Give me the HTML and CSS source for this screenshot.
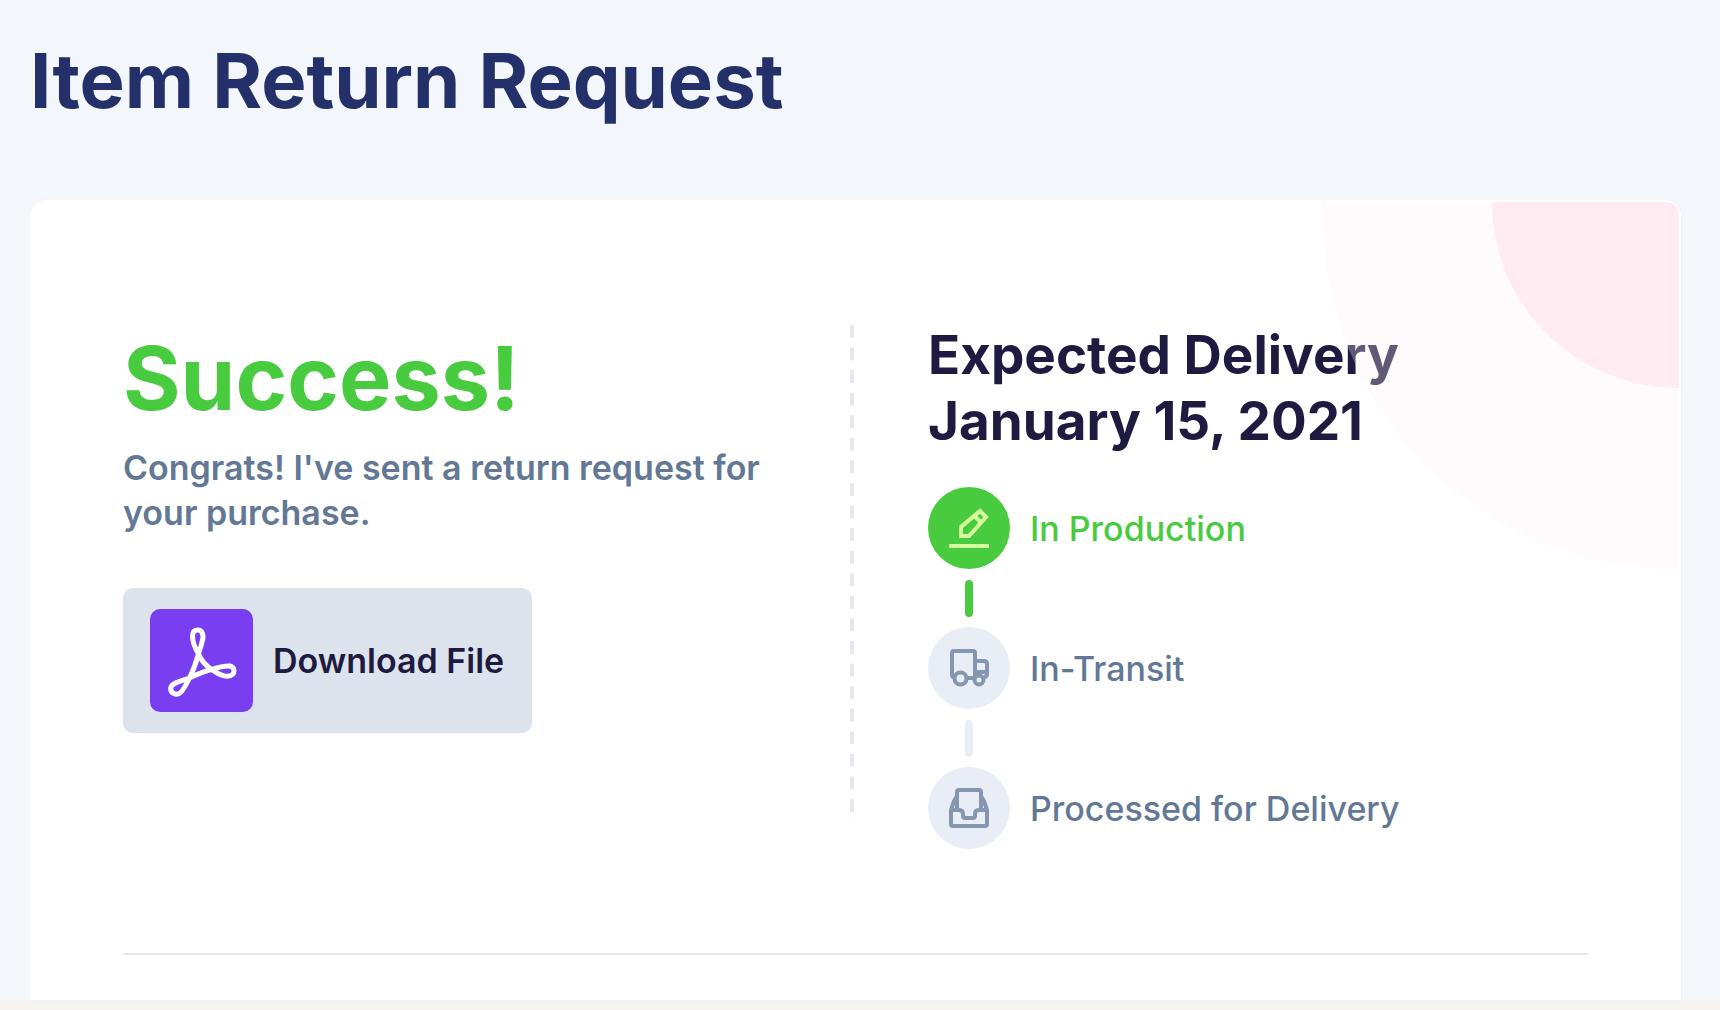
FILE: index.html
```html
<!DOCTYPE html>
<html lang="en">
<head>
<meta charset="utf-8">
<meta name="viewport" content="width=device-width, initial-scale=1">
<title>Item Return Request</title>
<link rel="stylesheet" href="styles.css">
</head>
<body>
<main class="page">
  <h1 class="page-title">Item Return Request</h1>
  <section class="card">
    <div class="columns">
      <div class="result">
        <h2 class="result-title">Success!</h2>
        <p class="result-text">Congrats! I've sent a return request for your purchase.</p>
        <button class="download" type="button">
          <svg class="download-icon" viewBox="0 0 103 103" aria-hidden="true">
            <rect width="103" height="103" rx="10" fill="#783ef0"/>
            <path d="M47.700 21 C53 21 54 27 52 33 C51 38 49.500 41 48.500 45 C46 54 43 62 39.500 69 C36 76 33 82 30 84 C26 87 20.500 84 20.700 79.500 C21 74 29 73 39.500 69 C47 65.500 54 62 61.500 60.500 C69 58 76 56.500 80 57 C84.500 58 85 63 82.500 65.500 C78 69.500 69 66 61.500 60.500 C55 56 51 51 48.500 45 C45.500 40 42.500 32 42.500 27 C42.500 23 44.500 21 47.700 21 Z" fill="none" stroke="#fff" stroke-width="5" stroke-linejoin="round"/>
          </svg>
          <span>Download File</span>
        </button>
      </div>
      <div class="separator"></div>
      <div class="delivery">
        <h2 class="delivery-title">Expected Delivery<br>January 15, 2021</h2>
        <ol class="steps">
          <li class="step step-active">
            <span class="step-badge">
              <svg class="step-icon" viewBox="0 0 40 40" fill="none" stroke="currentColor" stroke-width="4" aria-hidden="true">
                <path d="M0 38H40"/>
                <path d="M12 28V19L31 3L37 9L20 28Z M25.500 8L32 14.500"/>
              </svg>
            </span>
            <span>In Production</span>
          </li>
          <li class="step">
            <span class="step-badge">
              <svg class="step-icon" viewBox="0 0 40 40" fill="none" stroke="currentColor" stroke-width="4" aria-hidden="true">
                <path d="M6 29H5Q3 29 3 27V5Q3 3 5 3H24Q26 3 26 5V29 M26 13H35Q38 13 38 16V26Q38 29 35 29 M26 24H38 M17 30H25"/>
                <circle cx="11.500" cy="30.500" r="6"/>
                <circle cx="30" cy="32" r="4.500"/>
              </svg>
            </span>
            <span>In-Transit</span>
          </li>
          <li class="step">
            <span class="step-badge">
              <svg class="step-icon" viewBox="0 0 40 40" fill="none" stroke="currentColor" stroke-width="4" stroke-linejoin="round" aria-hidden="true">
                <path d="M2 22H10Q14 22 14 26V28Q14 30 16 30H24Q26 30 26 28V26Q26 22 30 22H38"/>
                <path d="M8 8L5 13L2 22V36Q2 38 4 38H36Q38 38 38 36V22L35 13L32 8"/>
                <path d="M8 22V4Q8 2 10 2H30Q32 2 32 4V22"/>
              </svg>
            </span>
            <span>Processed for Delivery</span>
          </li>
        </ol>
      </div>
    </div>
    <hr class="rule">
    <svg class="decoration" viewBox="0 0 357 368" aria-hidden="true">
      <path d="M0 0H357V367A355 355 0 0 1 0 12Z" fill="#fff0f5" fill-opacity=".3"/>
      <path d="M170 0H345Q357 0 357 12V186A187 186 0 0 1 170 0Z" fill="#ffebf1"/>
    </svg>
  </section>
</main>
<footer class="bottom-strip"></footer>
</body>
</html>
```
FILE: styles.css
```css
* {
  box-sizing: border-box;
}

body {
  margin: 0;
  min-height: 100vh;
  display: flex;
  flex-direction: column;
  background: #f3f6fb;
  color: #1e1a40;
  font-family: Inter, "Open Sans", sans-serif;
}

h1,
h2,
p,
ol {
  margin: 0;
  padding: 0;
}

.page {
  flex: 1;
  display: flex;
  flex-direction: column;
  gap: 72px;
  padding: 32px 39px 0 30px;
}

.page-title {
  color: #23306a;
  font-size: 76px;
  font-weight: 700;
  line-height: 96px;
}

.card {
  position: relative;
  flex: 1;
  padding: 122px 93px 43px;
  border-radius: 16px 16px 0 0;
  background: #fff;
  box-shadow: 0 0 2px #e9edf8;
}

.columns {
  display: grid;
  grid-template-columns: 727fr 4px 734fr;
}

.result {
  display: flex;
  flex-direction: column;
  align-items: flex-start;
  padding: 8px 40px 0 0;
}

.result-title {
  color: #49cb3f;
  font-size: 88px;
  font-weight: 700;
  line-height: 96px;
}

.result-text {
  margin-top: 19px;
  color: #627894;
  font-size: 34px;
  font-weight: 600;
  line-height: 45px;
}

.download {
  display: flex;
  align-items: center;
  gap: 20px;
  margin-top: 53px;
  padding: 21px 28px 21px 27px;
  border: 0;
  border-radius: 10px;
  background: #dde3ed;
  color: inherit;
  font: 600 34px/45px Inter, "Open Sans", sans-serif;
  cursor: pointer;
}

.download-icon {
  width: 103px;
  height: 103px;
}

.separator {
  height: 497px;
  margin-top: 3px;
  background-image: linear-gradient(#e5e9ed 56%, transparent 56%);
  background-size: 4px 23px;
  background-repeat: round;
}

.delivery {
  padding-left: 74px;
}

.delivery-title {
  font-size: 53px;
  font-weight: 700;
  line-height: 66px;
}

.steps {
  display: grid;
  gap: 58px;
  margin-top: 33px;
  list-style: none;
}

.step {
  position: relative;
  display: flex;
  align-items: center;
  gap: 20px;
  color: #627894;
  font-size: 34px;
  font-weight: 500;
  line-height: 45px;
}

.step:not(:last-child)::after {
  content: "";
  position: absolute;
  top: 93px;
  left: 37px;
  width: 8px;
  height: 37px;
  border-radius: 4px;
  background: #e9edf5;
}

.step-badge {
  display: grid;
  place-items: center;
  width: 82px;
  height: 82px;
  border-radius: 50%;
  background: #e9edf5;
  color: #8596b0;
}

.step-icon {
  width: 40px;
  height: 40px;
}

.step-active {
  color: #49cb3f;
}

.step-active .step-badge {
  background: #49cb3f;
  color: #d5ff9e;
}

.step.step-active::after {
  background: #49cb3f;
}

.rule {
  height: 2px;
  margin: 104px 0 0;
  border: 0;
  background: #e5e9ed;
}

.decoration {
  position: absolute;
  top: 2px;
  right: 2px;
  width: 357px;
  height: 368px;
  border-radius: 0 12px 0 0;
  pointer-events: none;
}

.bottom-strip {
  height: 10px;
  background: #f5f4f0;
}
```
